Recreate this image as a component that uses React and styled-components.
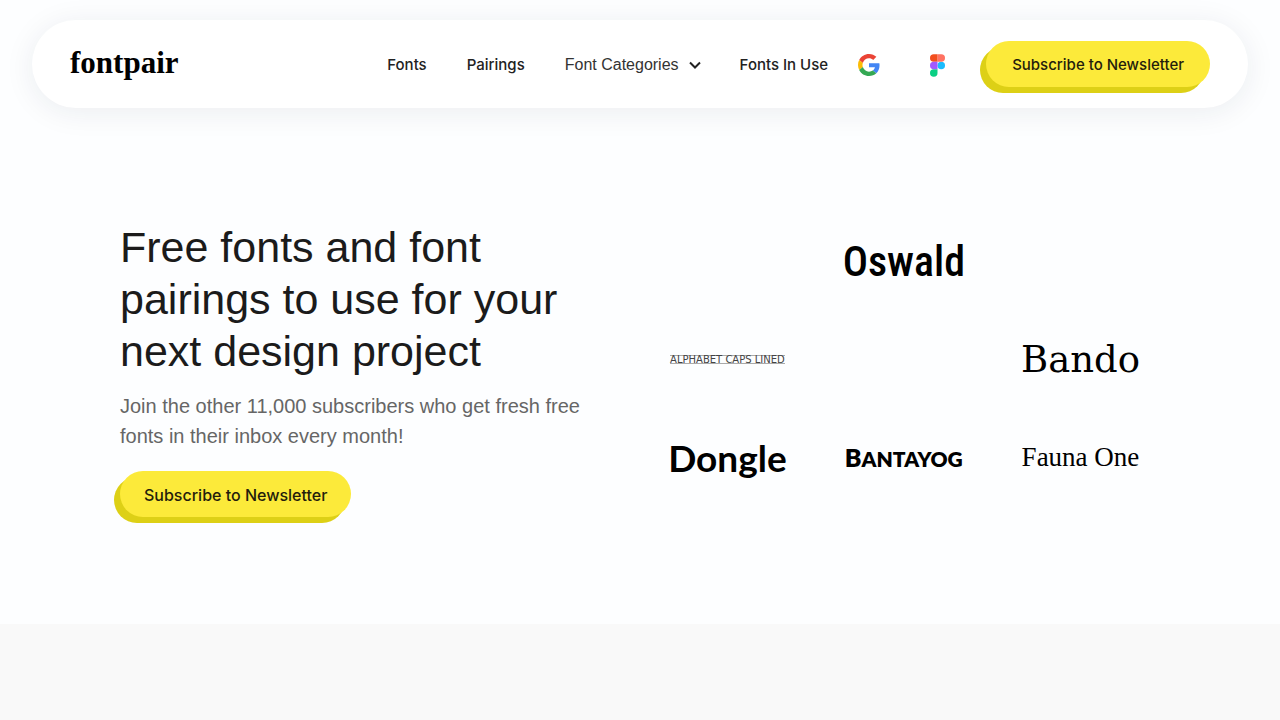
import React from "react";
import styled, { createGlobalStyle } from "styled-components";

const GlobalStyle = createGlobalStyle`
  *, *::before, *::after { box-sizing: border-box; }
  body {
    margin: 0;
    min-height: 100vh;
    background: #f9f9f9;
    color: #1b1b1b;
    font-family: "Liberation Sans", Arial, sans-serif;
  }
  h1, p, ul { margin: 0; padding: 0; }
`;

const Page = styled.div`
  background: #fdfeff;
  padding: 20px 32px 0;
`;

const Header = styled.header`
  display: flex;
  align-items: center;
  justify-content: space-between;
  height: 88px;
  padding: 0 38px;
  border-radius: 44px;
  background: #fff;
  box-shadow: 0 4px 30px rgba(30, 40, 60, 0.08);
`;

const Logo = styled.a`
  padding-bottom: 2px;
  color: #000;
  font: 700 31px/40px "Liberation Serif", serif;
  text-decoration: none;
`;

const Nav = styled.nav`
  display: flex;
  align-items: center;
`;

const NavLink = styled.a`
  margin-right: ${(p) => p.$gap || 40}px;
  padding-top: 2px;
  color: #222;
  font: 500 15px/24px Inter, sans-serif;
  text-decoration: none;
`;

const NavMenu = styled.button`
  display: flex;
  align-items: center;
  gap: 8px;
  margin: 0 37px 0 0;
  padding: 2px 0 0;
  border: 0;
  background: none;
  color: #333;
  font: 400 16px/24px "Liberation Sans", sans-serif;
`;

const IconLink = styled.a`
  display: flex;
  margin-right: ${(p) => p.$gap}px;
  padding-top: 2px;
`;

const Subscribe = styled.button`
  height: 46px;
  padding: 1px ${(p) => (p.$large ? 24 : 26)}px 0;
  border: 0;
  border-radius: 23px;
  background: #fcea3a;
  box-shadow: -6px 6px 0 #ddd016;
  color: #241d0c;
  font: 500 ${(p) => (p.$large ? 16 : 15)}px/24px Inter, sans-serif;
  white-space: nowrap;
`;

const Hero = styled.main`
  display: grid;
  grid-template-columns: 1fr 1fr;
  column-gap: 62px;
  align-items: start;
  max-width: 1040px;
  margin: 0 auto;
  padding: 113px 0 107px;
`;

const Intro = styled.section`
  display: flex;
  flex-direction: column;
  align-items: flex-start;
`;

const Title = styled.h1`
  color: #1b1b1b;
  font-size: 43px;
  font-weight: 400;
  line-height: 52px;
`;

const Lead = styled.p`
  margin: 14px 0 20px;
  color: #666;
  font-size: 20px;
  line-height: 30px;
`;

const Samples = styled.ul`
  display: grid;
  grid-template-columns: repeat(3, 1fr);
  row-gap: 18px;
  column-gap: 56px;
  margin-right: 20px;
  list-style: none;
`;

const Sample = styled.li`
  display: flex;
  align-items: center;
  justify-content: center;
  height: 80px;
  color: #000;
  white-space: nowrap;
  font-family: ${(p) => p.$family};
  font-size: ${(p) => p.$size}px;
  font-weight: ${(p) => p.$weight || 400};
`;

const Lined = styled.span`
  border-top: 1px solid #aaa;
  border-bottom: 1px solid #aaa;
  color: #444;
  line-height: 7px;
`;

const SmallCaps = styled.span`
  font-size: 21px;
`;

const samples = [
  {},
  { text: "Oswald", family: '"Roboto Condensed", Roboto, sans-serif', size: 42, weight: 500 },
  {},
  { text: <Lined>ALPHABET CAPS LINED</Lined>, family: '"DejaVu Sans", sans-serif', size: 10 },
  {},
  { text: "Bando", family: '"DejaVu Serif", serif', size: 37 },
  { text: "Dongle", family: "Lato, sans-serif", size: 37, weight: 700 },
  { text: <span>B<SmallCaps>ANTAYOG</SmallCaps></span>, family: "Lato, sans-serif", size: 25, weight: 800 },
  { text: "Fauna One", family: '"Liberation Serif", serif', size: 27 },
];

const Chevron = () => (
  <svg width="16" height="16" viewBox="0 0 16 16" fill="none" stroke="#222" strokeWidth="2" aria-hidden="true">
    <path d="M3 5.500 8 10.500 13 5.500" />
  </svg>
);

const GoogleIcon = () => (
  <svg width="22" height="22" viewBox="0 0 48 48" aria-hidden="true">
    <path fill="#ea4335" d="M24 9.5c3.54 0 6.71 1.22 9.21 3.6l6.85-6.85C35.9 2.38 30.47 0 24 0 14.62 0 6.51 5.38 2.56 13.22l7.98 6.19C12.43 13.72 17.74 9.5 24 9.5z" />
    <path fill="#4285f4" d="M46.98 24.55c0-1.57-.15-3.09-.38-4.55H24v9.02h12.94c-.58 2.96-2.26 5.48-4.78 7.18l7.73 6c4.51-4.18 7.09-10.36 7.09-17.65z" />
    <path fill="#fbbc05" d="M10.53 28.59c-.48-1.45-.76-2.99-.76-4.59s.27-3.14.76-4.59l-7.98-6.19C.92 16.46 0 20.12 0 24s.92 7.54 2.56 10.78l7.97-6.19z" />
    <path fill="#34a853" d="M24 48c6.48 0 11.93-2.13 15.89-5.81l-7.73-6c-2.15 1.45-4.92 2.3-8.16 2.3-6.26 0-11.57-4.22-13.47-9.91l-7.98 6.19C6.51 42.62 14.62 48 24 48z" />
  </svg>
);

const FigmaIcon = () => (
  <svg width="15" height="23" viewBox="0 0 38 57" aria-hidden="true">
    <path fill="#1abcfe" d="M19 28.5a9.5 9.5 0 1 1 19 0 9.5 9.5 0 0 1-19 0z" />
    <path fill="#0acf83" d="M0 47.5A9.5 9.5 0 0 1 9.5 38H19v9.5a9.5 9.5 0 1 1-19 0z" />
    <path fill="#ff7262" d="M19 0v19h9.5a9.5 9.5 0 1 0 0-19H19z" />
    <path fill="#f24e1e" d="M0 9.5A9.5 9.5 0 0 0 9.5 19H19V0H9.5A9.5 9.5 0 0 0 0 9.5z" />
    <path fill="#a259ff" d="M0 28.5A9.5 9.5 0 0 0 9.5 38H19V19H9.5A9.5 9.5 0 0 0 0 28.5z" />
  </svg>
);

export default function App() {
  return (
    <>
      <GlobalStyle />
      <Page>
        <Header>
          <Logo href="#">fontpair</Logo>
          <Nav>
            <NavLink href="#fonts">Fonts</NavLink>
            <NavLink href="#pairings">Pairings</NavLink>
            <NavMenu type="button" aria-haspopup="true">
              Font Categories
              <Chevron />
            </NavMenu>
            <NavLink href="#use" $gap={30}>Fonts In Use</NavLink>
            <IconLink href="#google" aria-label="Google Fonts" $gap={50}><GoogleIcon /></IconLink>
            <IconLink href="#figma" aria-label="Figma" $gap={41}><FigmaIcon /></IconLink>
            <Subscribe type="button">Subscribe to Newsletter</Subscribe>
          </Nav>
        </Header>
        <Hero>
          <Intro>
            <Title>Free fonts and font pairings to use for your next design project</Title>
            <Lead>Join the other 11,000 subscribers who get fresh free fonts in their inbox every month!</Lead>
            <Subscribe type="button" $large>Subscribe to Newsletter</Subscribe>
          </Intro>
          <Samples>
            {samples.map((s, i) => (
              <Sample key={i} $family={s.family} $size={s.size} $weight={s.weight}>
                {s.text}
              </Sample>
            ))}
          </Samples>
        </Hero>
      </Page>
    </>
  );
}
